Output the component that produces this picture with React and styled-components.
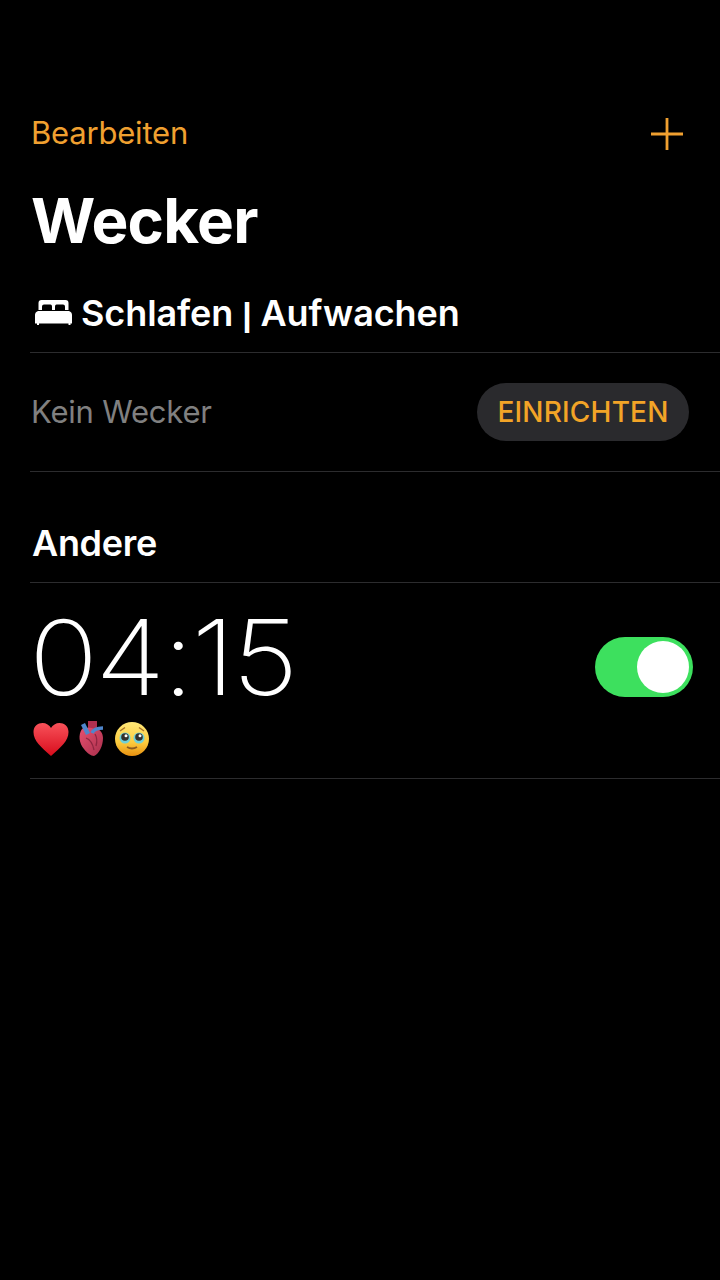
import React from "react";
import styled, { createGlobalStyle } from "styled-components";

const Global = createGlobalStyle`
  html, body { margin: 0; padding: 0; background: #000; }
  body { font-family: Inter, "Liberation Sans", sans-serif; }
`;
const Page = styled.div`
  width: 720px; height: 1280px; background: #000; color: #fff; overflow: hidden;
  padding-top: 113px; box-sizing: border-box;
`;
const Toolbar = styled.div`
  height: 40px; display: flex; align-items: center; justify-content: space-between;
  padding: 0 36px 0 31px;
`;
const EditLink = styled.span`
  font-size: 31px; color: #f0a030; letter-spacing: -0.2px; margin-top: -2px;
`;
const Title = styled.h1`
  margin: 0; height: 136px; line-height: 136px; padding-left: 31px;
  font-size: 62px; font-weight: 700; letter-spacing: -0.8px;
`;
const Divided = styled.div`
  margin-left: 30px; border-bottom: 1px solid #2c2c2e;
  display: flex; box-sizing: border-box; height: ${p => p.$h}px;
  padding-left: 2px;
`;
const SleepHead = styled(Divided)`
  align-items: flex-start; gap: 9px; padding-top: 2px; padding-left: 2px;
`;
const SleepText = styled.span`
  font-size: 36px; font-weight: 600; line-height: 44px; letter-spacing: -0.1px;
`;
const Bar = styled.span`
  font-family: "Liberation Sans", sans-serif; font-weight: 700; font-size: 34px;
`;
const BedIcon = styled.svg`
  width: 40px; height: 30px; margin-top: 7px; flex: none;
`;
const SetupRow = styled(Divided)`
  align-items: center; justify-content: space-between; padding: 0 31px 0 1px;
`;
const Muted = styled.span`
  font-size: 31px; color: #808080; letter-spacing: -0.2px; margin-top: -2px;
`;
const Pill = styled.button`
  width: 212px; height: 58px; border: 0; border-radius: 29px; background: #2a2a2d;
  color: #f2a427; font: 550 28px Inter, "Liberation Sans", sans-serif; letter-spacing: 0.2px;
  padding: 0;
`;
const SectionHead = styled(Divided)`
  align-items: flex-start; padding-top: 51px;
`;
const SectionText = styled.span`
  font-size: 36px; font-weight: 600; line-height: 40px; letter-spacing: -0.3px;
`;
const AlarmRow = styled(Divided)`
  align-items: flex-start; justify-content: space-between; padding-right: 27px;
`;
const AlarmInfo = styled.div`
  display: flex; flex-direction: column;
`;
const Time = styled.div`
  font-size: 104px; font-weight: 250; line-height: 124px; letter-spacing: -2.500px; margin: 12px 0 0 -3px;
  transform: scaleX(1.1); transform-origin: left center;
`;
const Emojis = styled.div`
  display: flex; align-items: center; gap: 9px; margin: 1px 0 0 1px;
`;
const Switch = styled.div`
  width: 98px; height: 60px; margin-top: 54px; border-radius: 30px; background: #3de05e;
  display: flex; justify-content: flex-end; align-items: center; padding-right: 4px; box-sizing: border-box;
`;
const Knob = styled.div`
  width: 52px; height: 52px; border-radius: 50%; background: #fff;
`;
const Plus = styled.svg`width: 34px; height: 34px; margin-top: 2px;`;

export default function App() {
  return (
    <Page>
      <Global />
      <Toolbar>
        <EditLink>Bearbeiten</EditLink>
        <Plus viewBox="0 0 34 34"><path d="M17 1v32M1 17h32" stroke="#f0a030" strokeWidth="2.8" /></Plus>
      </Toolbar>
      <Title>Wecker</Title>
      <SleepHead $h={64}>
        <BedIcon viewBox="0 0 40 30" fill="#fff">
          <path d="M6.500 12V5Q6.500 2 9.500 2h24q3 0 3 3v7H33V8.500q0-2-2-2h-6.500q-1.500 0-1.500 2V12h-3V8.500q0-2-1.500-2H12q-2 0-2 2V12z" />
          <path d="M6 13h31q3 1 3 4v8.500h-1.500V27h-2v-1.500H7V27H5v-1.500H3V17q0-3 3-4z" />
        </BedIcon>
        <SleepText>Schlafen <Bar>|</Bar> Aufwachen</SleepText>
      </SleepHead>
      <SetupRow $h={119}>
        <Muted>Kein Wecker</Muted>
        <Pill>EINRICHTEN</Pill>
      </SetupRow>
      <SectionHead $h={111}><SectionText>Andere</SectionText></SectionHead>
      <AlarmRow $h={196}>
        <AlarmInfo>
          <Time>04:15</Time>
          <Emojis>
            <svg width="36" height="36" viewBox="0 0 36 36">
              <defs><linearGradient id="h" x1="0" y1="0" x2="0" y2="1"><stop offset="0" stopColor="#f8525a" /><stop offset="1" stopColor="#d80c1c" /></linearGradient></defs>
              <path d="M18 35C8 26 0.500 20 0.500 11 0.500 5 5 2 9.500 2c3.500 0 7 2 8.500 5 1.500-3 5-5 8.500-5 4.500 0 9 3 9 9 0 9-7.500 15-17.500 24z" fill="url(#h)" />
            </svg>
            <svg width="27" height="37" viewBox="0 0 27 37">
              <defs><linearGradient id="a" x1="0" y1="0" x2="1" y2="1"><stop offset="0" stopColor="#e8506f" /><stop offset="1" stopColor="#a82f4c" /></linearGradient></defs>
              <path d="M10 1h9v9h-9z" fill="#b03050" />
              <path d="M4 9c-4 6-3 14 2 20 3 4 7 7 10 7 5-2 9-10 9-18 0-5-3-9-7-9-5-1-10-2-14 0z" fill="url(#a)" />
              <path d="M5 4l5 10" stroke="#4f86cc" strokeWidth="4.500" fill="none" />
              <path d="M14 13q2-5 11-5" stroke="#4f86cc" strokeWidth="3.500" fill="none" />
              <path d="M8 18q6 2 8 12M17 14q3 5 1 12" stroke="#8e2540" strokeWidth="1.300" fill="none" />
            </svg>
            <svg width="36" height="36" viewBox="0 0 36 36">
              <defs><linearGradient id="f" x1="0" y1="0" x2="0" y2="1"><stop offset="0" stopColor="#ffe878" /><stop offset="0.6" stopColor="#fbcb3e" /><stop offset="1" stopColor="#e8900f" /></linearGradient></defs>
              <circle cx="18" cy="18" r="17" fill="url(#f)" />
              <circle cx="11" cy="17" r="5.500" fill="#6fd0d8" /><circle cx="25" cy="17" r="5.500" fill="#6fd0d8" />
              <circle cx="11" cy="16" r="3.800" fill="#33302c" /><circle cx="25" cy="16" r="3.800" fill="#33302c" />
              <circle cx="12" cy="14.800" r="1.500" fill="#fff" /><circle cx="26" cy="14.800" r="1.500" fill="#fff" />
              <path d="M6 10l5-3.500M30 10l-5-3.500" stroke="#a87428" strokeWidth="1.500" fill="none" />
              <path d="M13 26q5 3 10 0" stroke="#8a5a20" strokeWidth="1.800" fill="none" />
            </svg>
          </Emojis>
        </AlarmInfo>
        <Switch><Knob /></Switch>
      </AlarmRow>
    </Page>
  );
}
